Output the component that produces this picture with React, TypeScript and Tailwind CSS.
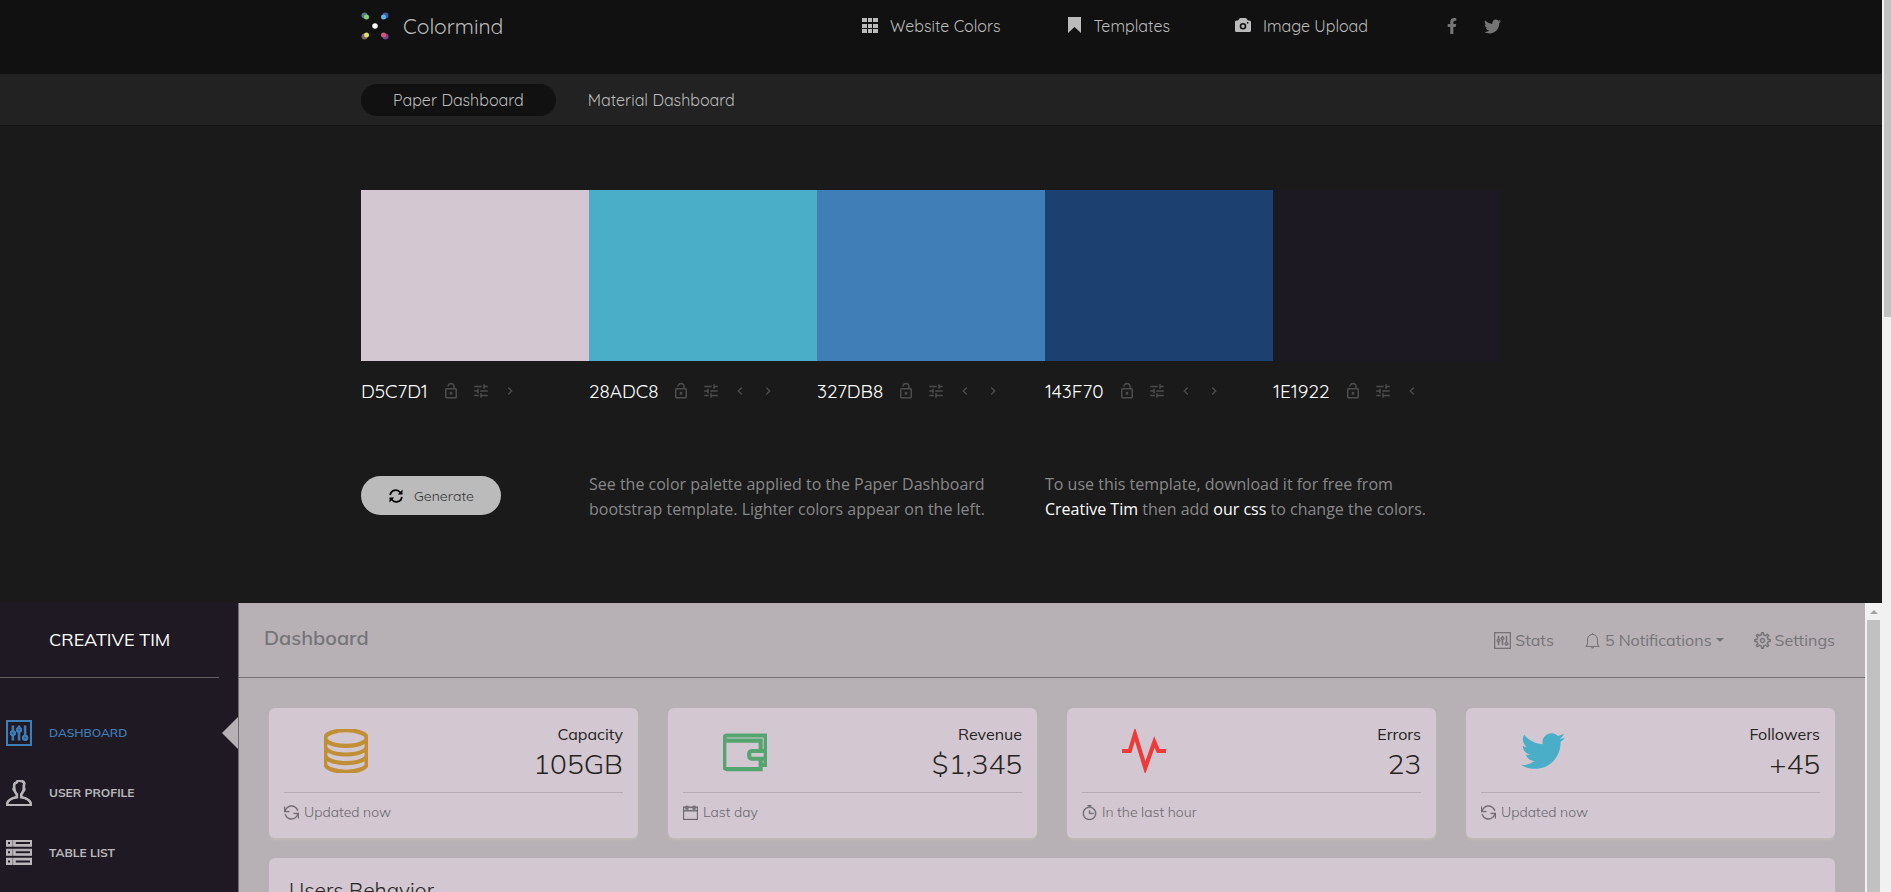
import type { ComponentType, ReactNode } from "react";
import {
  TfiPanel, TfiUser, TfiServer, TfiWallet, TfiPulse, TfiTwitterAlt,
  TfiReload, TfiCalendar, TfiTimer, TfiBell, TfiSettings, TfiViewListAlt,
} from "react-icons/tfi";
import { MdOutlineLockOpen, MdTune, MdChevronLeft, MdChevronRight } from "react-icons/md";
import { FaFacebookF, FaTwitter } from "react-icons/fa";

type Icon = ComponentType<{ className?: string }>;

function Logo() {
  return (
    <svg viewBox="0 0 28 28" className="size-7" aria-hidden="true">
      <circle cx="3.5" cy="3.5" r="3" fill="#4a7d86" />
      <circle cx="5.5" cy="5" r="2.5" fill="#86cf74" />
      <circle cx="24.5" cy="3.5" r="3" fill="#3f5c9c" />
      <circle cx="22.5" cy="5" r="2.5" fill="#62b4ea" />
      <circle cx="3.5" cy="24.5" r="3" fill="#7a6668" />
      <circle cx="5.5" cy="23" r="2.5" fill="#e2db64" />
      <circle cx="24.5" cy="24.5" r="3" fill="#6c4689" />
      <circle cx="22.5" cy="23" r="2.5" fill="#d9547b" />
      <circle cx="14" cy="14" r="2.75" fill="#fff" />
    </svg>
  );
}

function GridIcon({ className }: { className?: string }) {
  return (
    <svg viewBox="0 0 18 18" className={className} fill="currentColor" aria-hidden="true">
      <path d="M1 1h5v4H1zM7 1h4v4H7zM12 1h5v4h-5zM1 7h5v4H1zM7 7h4v4H7zM12 7h5v4h-5zM1 12h5v4H1zM7 12h4v4H7zM12 12h5v4h-5z" />
    </svg>
  );
}

function BookmarkIcon({ className }: { className?: string }) {
  return (
    <svg viewBox="0 0 18 18" className={className} fill="currentColor" aria-hidden="true">
      <path d="M3 0h13v16l-6.500-6L3 16z" />
    </svg>
  );
}

function CameraIcon({ className }: { className?: string }) {
  return (
    <svg viewBox="0 0 18 18" className={className} aria-hidden="true">
      <path fill="currentColor" d="M6 1h6l2 2.500h1.500A1.500 1.500 0 0 1 17 5v8.500a1.500 1.500 0 0 1-1.500 1.500h-13A1.500 1.500 0 0 1 1 13.500V5a1.500 1.500 0 0 1 1.500-1.500H4z" />
      <circle cx="9" cy="9.200" r="2.500" fill="none" stroke="#111" strokeWidth="1.600" />
      <circle cx="13.600" cy="5.800" r=".9" fill="#111" />
    </svg>
  );
}

function RefreshIcon({ className }: { className?: string }) {
  return (
    <svg viewBox="0 0 16 16" className={className} aria-hidden="true">
      <path fill="none" stroke="currentColor" strokeWidth="1.700" d="M2.200 7.200A5.600 5.600 0 0 1 12.300 4.400M13.800 8.800A5.600 5.600 0 0 1 3.700 11.600" />
      <path fill="currentColor" d="M14.500 1.600v4.900H9.800zM1.500 14.400V9.500h4.700z" />
    </svg>
  );
}

const swatches = [
  { hex: "D5C7D1", bg: "bg-[#d3c7d1]", prev: false, next: true },
  { hex: "28ADC8", bg: "bg-[#4aaec9]", prev: true, next: true },
  { hex: "327DB8", bg: "bg-[#407eb8]", prev: true, next: true },
  { hex: "143F70", bg: "bg-[#1c4070]", prev: true, next: true },
  { hex: "1E1922", bg: "bg-[#1d1922]", prev: true, next: false },
];

function TopLink({ icon: I, children, active }: { icon: Icon; children: ReactNode; active?: boolean }) {
  return (
    <a
      href="#"
      className={
        active
          ? "flex h-[75px] items-start gap-[11px] border-b border-[#717171] px-8 pt-4"
          : "flex h-[75px] items-start gap-[11px] px-8 pt-4"
      }
    >
      <I className="mt-px size-[18px]" />
      <span className="leading-5">{children}</span>
    </a>
  );
}

function SwatchButton({ label, icon: I, small }: { label: string; icon: Icon; small?: boolean }) {
  return (
    <button type="button" aria-label={label} className={small ? "flex w-7 items-center justify-center" : "flex w-[30px] items-center justify-center"}>
      <I className={small ? "size-4" : "size-[18px]"} />
    </button>
  );
}

function StatCard({ icon: I, tone, label, value, footIcon: F, foot }: {
  icon: Icon; tone: string; label: string; value: string; footIcon: Icon; foot: string;
}) {
  return (
    <section className="h-[130px] rounded-md bg-[#d3c7d1] px-[15px] pt-[15px] shadow-[0_2px_2px_rgba(204,197,185,0.5)]">
      <div className="flex h-[70px] items-start justify-between border-b border-[#b5abb3] pl-10">
        <I className={`mt-1.5 size-11 ${tone}`} />
        <div className="text-right text-[#252422]">
          <p className="text-base leading-[22px]">{label}</p>
          <p className="text-[28px] leading-[38px] font-light">{value}</p>
        </div>
      </div>
      <div className="flex items-center gap-[5px] pt-2 text-sm leading-[22px] font-light text-[#6c686c]">
        <F className="size-[15px] stroke-[0.5px]" />
        <span>{foot}</span>
      </div>
    </section>
  );
}

function SideLink({ icon: I, children, active }: { icon: Icon; children: ReactNode; active?: boolean }) {
  return (
    <a
      href="#"
      className={
        active
          ? "relative flex h-[60px] items-center gap-[17px] pl-1.5 text-[#407eb8]"
          : "relative flex h-[60px] items-center gap-[17px] pl-1.5 text-[#bbb8bc]"
      }
    >
      <I className="size-[26px] stroke-[0.7px]" />
      <span className={active ? "text-xs font-semibold" : "text-xs font-bold"}>{children}</span>
      {active && (
        <span className="absolute top-[14px] right-0 border-y-16 border-r-16 border-y-transparent border-r-[#b7b1b5]" />
      )}
    </a>
  );
}

export default function App() {
  return (
    <div className="flex h-screen overflow-hidden bg-[#1a1a1a]">
      <div className="flex min-w-0 flex-1 flex-col font-['Quicksand','Lato',sans-serif] text-[#bbb]">
        <header className="bg-[#111] pr-5">
          <div className="mx-auto flex h-[74px] max-w-[1140px] items-start justify-between">
            <a href="#" className="flex items-center gap-3.5 pt-3">
              <Logo />
              <span className="text-[21px] leading-7">Colormind</span>
            </a>
            <nav className="flex text-base">
              <TopLink icon={GridIcon}>Website Colors</TopLink>
              <TopLink icon={BookmarkIcon} active>Templates</TopLink>
              <TopLink icon={CameraIcon}>Image Upload</TopLink>
              <div className="ml-11 flex gap-6 pt-[18px] text-[#757575]">
                <a href="#" aria-label="Facebook"><FaFacebookF className="size-4" /></a>
                <a href="#" aria-label="Twitter"><FaTwitter className="size-[17px]" /></a>
              </div>
            </nav>
          </div>
        </header>
        <div className="border-b border-[#151515] bg-[#222] pr-5">
          <nav className="mx-auto flex h-[51px] max-w-[1140px] items-center text-base">
            <a href="#" className="rounded-full bg-[#111] px-8 leading-8">Paper Dashboard</a>
            <a href="#" className="px-8 leading-8">Material Dashboard</a>
          </nav>
        </div>
        <main className="pt-16 pr-5">
          <div className="mx-auto max-w-[1140px]">
            <div className="grid grid-cols-5">
              {swatches.map((s) => (
                <div key={s.hex}>
                  <div className={`h-[171px] ${s.bg}`} />
                  <div className="flex h-[60px] items-center">
                    <span className="mr-2 text-[19px] text-white">{s.hex}</span>
                    <div className="flex text-[#4c4c4c]">
                      <SwatchButton label="Lock" icon={MdOutlineLockOpen} />
                      <SwatchButton label="Adjust" icon={MdTune} />
                      {s.prev && <SwatchButton label="Move left" icon={MdChevronLeft} small />}
                      {s.next && <SwatchButton label="Move right" icon={MdChevronRight} small />}
                    </div>
                  </div>
                </div>
              ))}
            </div>
            <div className="grid grid-cols-5 pt-[51px] pb-[81px] font-['Open_Sans',sans-serif] text-base leading-[25px] text-[#888]">
              <div className="pt-1">
                <button type="button" className="flex h-[39px] w-[140px] items-center justify-center gap-2.5 rounded-full bg-[#bbb] font-['Quicksand','Lato',sans-serif] text-sm text-[#333]">
                  <RefreshIcon className="size-4 text-black" />
                  Generate
                </button>
              </div>
              <p className="col-span-2">
                See the color palette applied to the Paper Dashboard<br />
                bootstrap template. Lighter colors appear on the left.
              </p>
              <p className="col-span-2">
                To use this template, download it for free from<br />
                <a href="#" className="text-white">Creative Tim</a> then add <a href="#" className="text-white">our css</a> to change the colors.
              </p>
            </div>
          </div>
        </main>
        <div className="flex min-h-0 flex-1 font-['Muli','Mulish','Nunito','Lato',sans-serif]">
          <aside className="w-[239px] shrink-0 border-r border-[#6f6b70] bg-[#1e1922]">
            <div className="mr-[19px] flex h-[75px] items-center border-b border-[#66615e] pl-[49px]">
              <a href="#" className="text-lg text-white">CREATIVE TIM</a>
            </div>
            <nav className="pt-[25px]">
              <SideLink icon={TfiPanel} active>DASHBOARD</SideLink>
              <SideLink icon={TfiUser}>USER PROFILE</SideLink>
              <SideLink icon={TfiViewListAlt}>TABLE LIST</SideLink>
            </nav>
          </aside>
          <div className="min-w-0 flex-1 overflow-hidden bg-[#b7b1b5]">
            <div className="flex h-[75px] items-center justify-between border-b border-[#717376] pr-[30px] pl-[25px] text-[#757477]">
              <h1 className="pb-1 text-[20px] font-semibold">Dashboard</h1>
              <nav className="flex gap-[30px] text-base">
                <a href="#" className="flex items-center gap-1"><TfiPanel className="size-[17px] stroke-[0.6px]" />Stats</a>
                <a href="#" className="flex items-center gap-1">
                  <TfiBell className="size-[17px]" />5 Notifications
                  <span className="border-x-4 border-t-4 border-x-transparent border-t-current" />
                </a>
                <a href="#" className="flex items-center gap-1"><TfiSettings className="size-[17px] stroke-[0.6px]" />Settings</a>
              </nav>
            </div>
            <div className="px-[30px] pt-[30px]">
              <div className="grid grid-cols-4 gap-[30px]">
                <StatCard icon={TfiServer} tone="text-[#c18f35] stroke-[0.6px]" label="Capacity" value="105GB" footIcon={TfiReload} foot="Updated now" />
                <StatCard icon={TfiWallet} tone="text-[#55a571] stroke-[0.6px]" label="Revenue" value="$1,345" footIcon={TfiCalendar} foot="Last day" />
                <StatCard icon={TfiPulse} tone="text-[#ee3a3a] stroke-[0.6px]" label="Errors" value="23" footIcon={TfiTimer} foot="In the last hour" />
                <StatCard icon={TfiTwitterAlt} tone="text-[#4aaec9]" label="Followers" value="+45" footIcon={TfiReload} foot="Updated now" />
              </div>
              <section className="mt-5 h-[400px] rounded-md bg-[#d3c7d1] px-5 pt-[18px]">
                <h2 className="text-[21px] leading-7 font-light text-[#252422]">Users Behavior</h2>
              </section>
            </div>
          </div>
          <div className="w-[17px] shrink-0 bg-[#f1f1f1] px-0.5">
            <div className="flex h-[17px] items-center justify-center">
              <span className="border-x-4 border-b-4 border-x-transparent border-b-[#a3a3a3]" />
            </div>
            <div className="h-full bg-[#c1c1c1]" />
          </div>
        </div>
      </div>
      <div className="w-[9px] shrink-0 bg-[#f1f1f1] pl-0.5">
        <div className="h-[317px] bg-[#c1c1c1]" />
      </div>
    </div>
  );
}
